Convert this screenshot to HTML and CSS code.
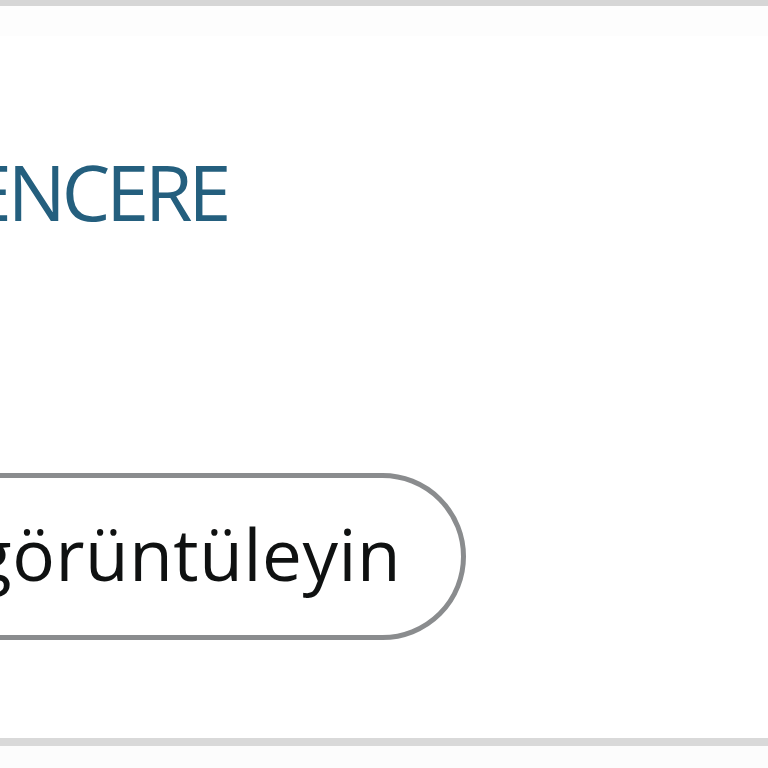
FILE: index.html
```html
<!DOCTYPE html>
<html lang="tr">
<head>
    <meta charset="UTF-8">
    <meta name="viewport" content="width=device-width, initial-scale=1.0">
    <title>Pencere</title>
    <link rel="stylesheet" href="styles.css">
</head>
<body>

<div class="page">
    <!-- Upper divider -->
    <div class="rule rule-top"></div>

    <section class="card">
        <h2 class="card-title">ENCERE</h2>
        <button class="pill-btn" type="button">görüntüleyin</button>
    </section>

    <!-- Lower divider -->
    <div class="rule rule-bottom"></div>
    <div class="page-foot"></div>
</div>

</body>
</html>
```

FILE: styles.css
```css
html, body {
    margin: 0;
    padding: 0;
    background-color: #ffffff;
    overflow: hidden;
}

body {
    font-family: "Open Sans", "Noto Sans", Arial, sans-serif;
    color: #0f1111;
}

.page {
    width: 768px;
    height: 768px;
    display: flex;
    flex-direction: column;
    overflow: hidden;
}

.rule {
    flex: none;
    background-color: #d6d6d6;
}

.rule-top {
    height: 6px;
    box-shadow: 0 1px 1px #e6e6e6;
}

.card {
    flex: none;
    height: 732px;
    display: flex;
    flex-direction: column;
    align-items: flex-start;
    background: linear-gradient(#fdfdfd 0, #fdfdfd 30px, #ffffff 30px);
}

.card-title {
    margin: 147px 0 0 -31px;
    font-size: 77px;
    line-height: 1;
    font-weight: 400;
    letter-spacing: -4px;
    color: #245f7e;
}

.pill-btn {
    margin: 243px 0 0 -91px;
    padding: 40px 60px 46px 59px;
    font-family: inherit;
    font-size: 71px;
    line-height: 1;
    letter-spacing: 0.6px;
    color: #0f1111;
    background-color: #ffffff;
    border: 5px solid #8a8c8e;
    border-radius: 90px;
    cursor: pointer;
}

.rule-bottom {
    height: 8px;
    background-color: #d9d9d9;
}

.page-foot {
    flex: 1;
    background-color: #fcfcfc;
}
```
